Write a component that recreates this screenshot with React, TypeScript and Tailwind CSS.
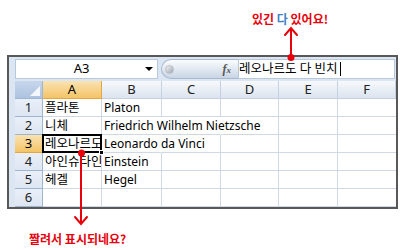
import React from "react";

type Row = { n: number; a: string; b: string };

const rows: Row[] = [
  { n: 1, a: "플라톤", b: "Platon" },
  { n: 2, a: "니체", b: "Friedrich Wilhelm Nietzsche" },
  { n: 3, a: "레오나르도 다 빈치", b: "Leonardo da Vinci" },
  { n: 4, a: "아인슈타인", b: "Einstein" },
  { n: 5, a: "헤겔", b: "Hegel" },
  { n: 6, a: "", b: "" },
];

const cols = ["A", "B", "C", "D", "E", "F"];

const font = "font-['Noto_Sans','Noto_Sans_CJK_KR',sans-serif]";

function Annotations() {
  return (
    <svg className="absolute inset-0 pointer-events-none z-20" width="404" height="250" viewBox="0 0 404 250">
      <g stroke="#e8000b" strokeWidth="2" fill="none" strokeLinecap="round">
        <path d="M291 29 V57" />
        <path d="M285 35 L291 28 L297 35" />
        <path d="M81 153 V223" />
        <path d="M75 217 L81 224 L87 217" />
      </g>
      <circle cx="291" cy="57.5" r="3.5" fill="#e8000b" />
      <circle cx="81.5" cy="153" r="3.5" fill="#e8000b" />
    </svg>
  );
}

function FormulaBar() {
  return (
    <div className="h-[24px] flex items-center pr-[1px]">
      <div className="w-[143px] h-[20px] bg-white border border-[#b9c9dd] flex items-center">
        <span className="flex-1 text-center text-[13px] text-black pl-[2px]">A3</span>
        <span className="w-0 h-0 border-l-[4px] border-r-[4px] border-t-[4px] border-l-transparent border-r-transparent border-t-black mr-[4px]" />
      </div>
      <div className="ml-[3px] w-[77px] h-[20px] rounded-l-full border border-[#a8b9cf] border-r-0 bg-gradient-to-b from-[#fbfcfe] to-[#c9d5e5] flex items-center">
        <span className="ml-[3px] w-[9px] h-[9px] rounded-full bg-gradient-to-br from-[#f4f4f4] to-[#9ea6b0] border border-[#b8bec6]" />
        <span className="ml-auto mr-[7px] font-['Liberation_Serif',serif] italic font-bold text-[12px] text-[#555]">
          f<span className="text-[9px]">x</span>
        </span>
      </div>
      <div className="flex-1 h-[20px] bg-white border border-[#b9c9dd] flex items-center">
        <span className="text-[12.5px] text-black">레오나르도 다 빈치</span>
        <span className="w-px h-[14px] bg-black ml-[2px]" />
      </div>
    </div>
  );
}

function Grid() {
  return (
    <div className="grid grid-cols-[28px_59px_60px_59px_58px_59px_58px] bg-white text-[12px]">
      <div className="h-[18px] bg-gradient-to-b from-[#c6d6ec] to-[#aec3e0] border-r border-b border-[#9eb6ce] relative">
        <svg className="absolute right-[2px] bottom-[2px]" width="10" height="10" viewBox="0 0 10 10">
          <path d="M10 0 V10 H0 Z" fill="#f4f7fb" />
        </svg>
      </div>
      {cols.map((c) => (
        <div
          key={c}
          className={
            "h-[18px] flex items-center justify-center text-[13px] border-r border-b " +
            (c === "A"
              ? "bg-gradient-to-b from-[#fae2b0] to-[#f4c466] border-[#e2a742] text-black"
              : "bg-gradient-to-b from-[#f7f9fc] to-[#dce4ef] border-[#c5d1e0] text-[#222]")
          }
        >
          {c}
        </div>
      ))}
      {rows.map((r) => (
        <React.Fragment key={r.n}>
          <div
            className={
              "h-[18px] flex items-center justify-center text-[13px] border-r border-b " +
              (r.n === 3
                ? "bg-gradient-to-b from-[#fae2b0] to-[#f4c466] border-[#e2a742] text-black"
                : "bg-gradient-to-b from-[#e9eff8] to-[#dde6f2] border-[#9eb6ce] text-[#222]")
            }
          >
            {r.n}
          </div>
          <div
            className={
              "h-[18px] border-r border-b border-[#d0d7e5] relative text-[12.5px] " +
              (r.n === 3 ? "" : "overflow-hidden")
            }
          >
            {r.n === 3 ? (
              <>
                <div className="absolute left-[-1px] top-[-1px] w-[60px] h-[19px] border-2 border-black overflow-hidden z-10">
                  <span className="block whitespace-nowrap leading-[15px] pl-[1px] text-black">{r.a}</span>
                </div>
                <span className="absolute right-[-3px] bottom-[-3px] w-[5px] h-[5px] bg-black border border-white z-10" />
              </>
            ) : (
              <span className="block whitespace-nowrap leading-[17px] pl-[2px] text-black">{r.a}</span>
            )}
          </div>
          <div
            className={
              "h-[18px] border-b border-[#d0d7e5] relative " +
              (r.n === 2 || r.n === 3 ? "border-r border-r-white" : "border-r")
            }
          >
            <span className="absolute left-[2px] top-0 whitespace-nowrap leading-[17px] text-black z-[5]">{r.b}</span>
          </div>
          <div className={"h-[18px] border-b border-[#d0d7e5] " + (r.n === 2 ? "border-r border-r-white" : "border-r")} />
          <div className="h-[18px] border-r border-b border-[#d0d7e5]" />
          <div className="h-[18px] border-r border-b border-[#d0d7e5]" />
          <div className="h-[18px] border-b border-[#d0d7e5]" />
        </React.Fragment>
      ))}
    </div>
  );
}

export default function App() {
  return (
    <div className={"w-[404px] h-[250px] bg-white relative overflow-hidden " + font}>
      <Annotations />
      <div className="h-[55px] pl-[252px] pt-[6px]">
        <span className="font-['Noto_Sans_CJK_KR',sans-serif] font-bold text-[12px] leading-[16px] text-[#e8000b]">
          있긴 <span className="text-[#3f7fc6]">다</span> 있어요!
        </span>
      </div>
      <div className="ml-[7px] w-[391px] h-[154px] border-2 border-[#585858] bg-[#dce6f3] pl-[6px] overflow-hidden">
        <FormulaBar />
        <Grid />
      </div>
      <div className="pl-[29px] pt-[17px]">
        <span className="font-['Noto_Sans_CJK_KR',sans-serif] font-bold text-[12px] leading-[16px] text-[#e8000b]">
          짤려서 표시되네요?
        </span>
      </div>
    </div>
  );
}
